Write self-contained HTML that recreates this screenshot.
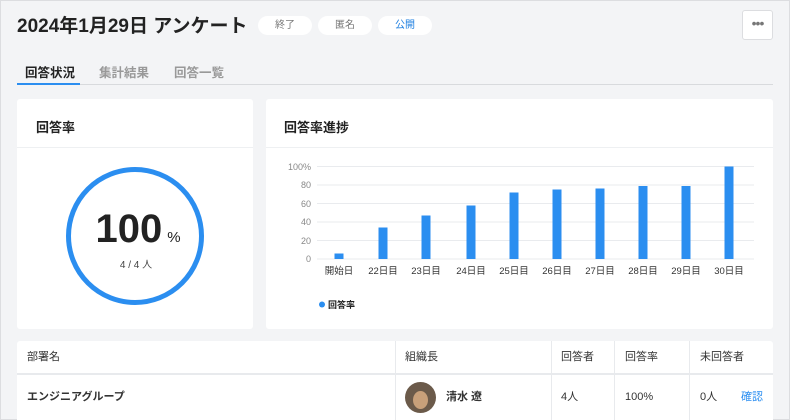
<!DOCTYPE html><html><head><meta charset="utf-8"><style>
*{box-sizing:border-box;margin:0;padding:0}
html,body{width:790px;height:420px;overflow:hidden}
body{background:#f3f4f6;font-family:"Liberation Sans","Noto Sans CJK JP",sans-serif;color:#222;position:relative;outline:1px solid #dcdde0;outline-offset:-1px}
.abs{position:absolute}
.pill{position:absolute;top:16px;height:19px;width:54px;border-radius:10px;background:#fff;font-size:10px;text-align:center;line-height:19px;color:#777}
.card{position:absolute;background:#fff;border-radius:3px}
.t{font-size:13px;font-weight:bold}
.th{position:absolute;top:0;height:32px;line-height:32px;font-size:11px;color:#333}
.td{position:absolute;top:33px;height:46px;line-height:46px;font-size:11px;color:#333}
.vl{position:absolute;top:0;bottom:0;width:1px;background:#e8eaed}
</style></head><body>
<div class="abs" style="left:17px;top:11px;font-size:19px;font-weight:bold;color:#222">2024年1月29日 アンケート</div>
<div class="pill" style="left:258px">終了</div>
<div class="pill" style="left:318px">匿名</div>
<div class="pill" style="left:378px;color:#1e7fe0">公開</div>
<div class="abs" style="left:742px;top:10px;width:31px;height:30px;background:#fff;border:1px solid #dcdde0;border-radius:3px;text-align:center;line-height:24px;color:#777;font-size:14px;letter-spacing:-1px">•••</div>
<div class="abs" style="left:25px;top:62px;font-size:12.5px;font-weight:bold">回答状況</div>
<div class="abs" style="left:99px;top:62px;font-size:12.5px;font-weight:bold;color:#999">集計結果</div>
<div class="abs" style="left:174px;top:62px;font-size:12.5px;font-weight:bold;color:#999">回答一覧</div>
<div class="abs" style="left:17px;top:84px;width:756px;height:1px;background:#d8dadd"></div>
<div class="abs" style="left:17px;top:83px;width:63px;height:2px;background:#2b8ef0"></div>

<div class="card" style="left:17px;top:99px;width:236px;height:230px">
<div class="t abs" style="left:19px;top:18px">回答率</div>
<div class="abs" style="left:0;top:48px;width:236px;height:1px;background:#eef0f2"></div>
<div class="abs" style="left:49px;top:68px;width:138px;height:138px;border:5.5px solid #2b8ef0;border-radius:50%"></div>
<div class="abs" style="left:0;top:108px;width:236px;text-align:center;font-size:40px;font-weight:bold;color:#222;padding-left:6px">100<span style="font-size:15px;font-weight:normal;margin-left:5px">%</span></div>
<div class="abs" style="left:0;top:157px;width:236px;text-align:center;font-size:10px;color:#444;padding-left:2px">4 / 4 人</div>
</div>

<div class="card" style="left:266px;top:99px;width:507px;height:230px">
<div class="t abs" style="left:18px;top:18px">回答率進捗</div>
<div class="abs" style="left:0;top:48px;width:507px;height:1px;background:#eef0f2"></div>
</div>
<svg class="abs" style="left:0;top:0" width="790" height="330">
<g stroke="#e9ebee" stroke-width="1">
<line x1="317" y1="166.5" x2="754" y2="166.5"/><line x1="317" y1="185" x2="754" y2="185"/><line x1="317" y1="203.5" x2="754" y2="203.5"/><line x1="317" y1="222" x2="754" y2="222"/><line x1="317" y1="240.5" x2="754" y2="240.5"/><line x1="317" y1="259" x2="754" y2="259"/></g>
<g font-size="9" fill="#888" text-anchor="end" font-family="Liberation Sans,sans-serif">
<text x="311" y="170">100%</text><text x="311" y="188">80</text><text x="311" y="207">60</text><text x="311" y="225">40</text><text x="311" y="244">20</text><text x="311" y="262">0</text></g>
<g fill="#2b8ef0">
<rect x="334.5" y="253.5" width="9" height="5.5"/><rect x="378.5" y="227.5" width="9" height="31.5"/><rect x="421.5" y="215.5" width="9" height="43.5"/><rect x="466.5" y="205.5" width="9" height="53.5"/><rect x="509.5" y="192.5" width="9" height="66.5"/><rect x="552.5" y="189.5" width="9" height="69.5"/><rect x="595.5" y="188.5" width="9" height="70.5"/><rect x="638.5" y="186" width="9" height="73"/><rect x="681.5" y="186" width="9" height="73"/><rect x="724.5" y="166.5" width="9" height="92.5"/></g>
<g font-size="9.5" fill="#333" text-anchor="middle" font-family="Liberation Sans,Noto Sans CJK JP,sans-serif">
<text x="339" y="274">開始日</text><text x="383" y="274">22日目</text><text x="426" y="274">23日目</text><text x="471" y="274">24日目</text><text x="514" y="274">25日目</text><text x="557" y="274">26日目</text><text x="600" y="274">27日目</text><text x="643" y="274">28日目</text><text x="686" y="274">29日目</text><text x="729" y="274">30日目</text></g>
<circle cx="322" cy="304.5" r="3" fill="#2b8ef0"/>
<text x="328" y="308" font-size="9" font-weight="bold" fill="#222" font-family="Liberation Sans,Noto Sans CJK JP,sans-serif">回答率</text>
</svg>

<div class="card" style="left:17px;top:341px;width:756px;height:80px;border-radius:3px 3px 0 0">
<div class="abs" style="left:0;top:32px;width:756px;height:2px;background:#e8eaed"></div>
<div class="vl" style="left:378px"></div><div class="vl" style="left:534px"></div><div class="vl" style="left:597px"></div><div class="vl" style="left:672px"></div>
<div class="th" style="left:10px">部署名</div><div class="th" style="left:388px">組織長</div><div class="th" style="left:544px">回答者</div><div class="th" style="left:608px">回答率</div><div class="th" style="left:683px">未回答者</div>
<div class="td" style="left:10px;font-weight:bold">エンジニアグループ</div>
<div class="abs" style="left:388px;top:41px;width:31px;height:31px;border-radius:50%;background:#6b5a4a;overflow:hidden"><div style="position:absolute;left:8px;top:9px;width:15px;height:18px;border-radius:50%;background:#c8a07a"></div></div>
<div class="td" style="left:429px;font-weight:bold">清水 遼</div>
<div class="td" style="left:544px">4人</div><div class="td" style="left:608px">100%</div><div class="td" style="left:683px">0人</div>
<div class="td" style="left:724px;color:#2b8ef0">確認</div>
</div>
</body></html>
